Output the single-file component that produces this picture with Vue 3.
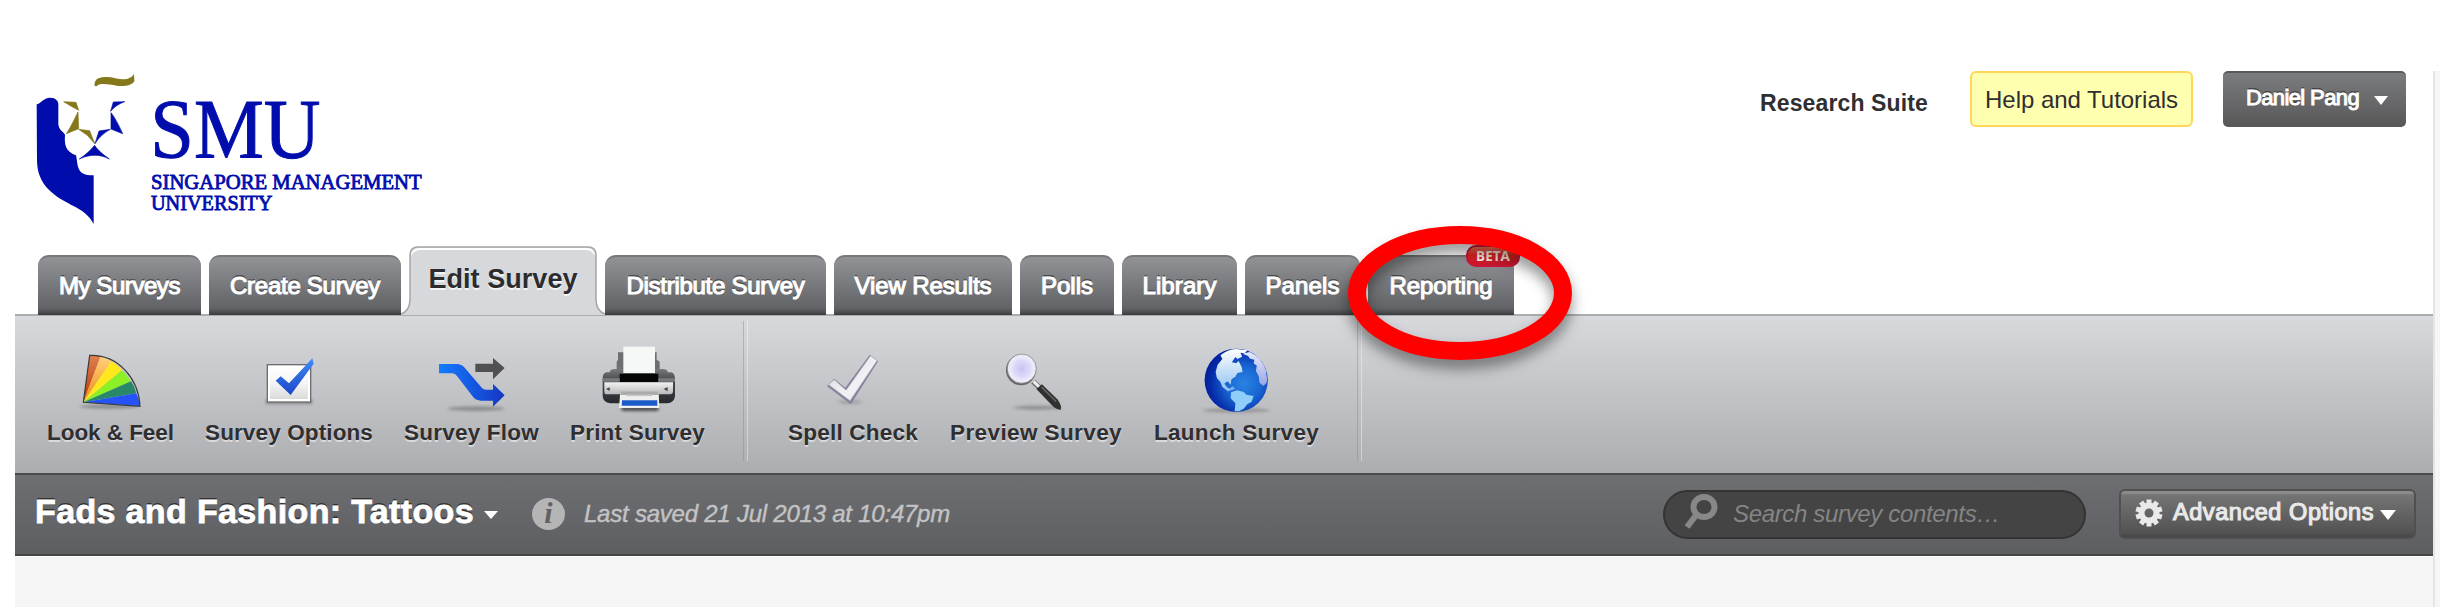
<script setup>
const tabs = [
  { label: 'My Surveys', w: 163, t: 121 },
  { label: 'Create Survey', w: 192, t: 150 },
  { label: 'Edit Survey', w: 188, t: 149, active: true },
  { label: 'Distribute Survey', w: 221, t: 178 },
  { label: 'View Results', w: 178, t: 137 },
  { label: 'Polls', w: 94, t: 52 },
  { label: 'Library', w: 115, t: 74 },
  { label: 'Panels', w: 115, t: 74 },
  { label: 'Reporting', w: 146, t: 103, beta: true },
]

// Tracks a label so that it fills the given width.
const vFit = {
  mounted(el, { value }) {
    const extra = value - el.getBoundingClientRect().width
    el.style.letterSpacing = extra / el.textContent.trim().length + 'px'
  },
}
</script>

<template>
  <div class="page">
    <div class="main">
      <header class="header">
        <svg class="logo" viewBox="45 63 1305 504">
          <path d="M284 108C282 92 290 82 316 81C345 80 365 95 388 84C397 80 401 76 402 70L403 94C394 108 370 110 350 107C325 103 297 98 290 109Z" fill="#85781b" />
          <path d="M110 163C123 161 130 143 150 143C168 143 175 154 175 163V222C176 240 190 245 195 254C193 285 196 303 228 316C234 340 228 374 270 376H281V522C272 505 258 487 225 470C160 438 111 405 111 330Z" fill="#000dac" />
          <g fill="#85781b" stroke="#85781b" stroke-width="2">
            <path d="M191 155L228 157L236 181L216 170ZM234 186L236 236L199 251C213 230 222 210 234 186ZM236 238L269 242L284 281L262 256Z" />
          </g>
          <g fill="#000dac" stroke="#000dac" stroke-width="2">
            <path d="M340 156L374 155C356 162 342 170 332 184ZM333 188C343 200 356 224 368 251L333 237ZM331 238L297 243L285 281C295 264 312 248 331 238ZM284 286C292 300 311 315 328 327C300 312 270 312 238 327C257 315 273 300 284 286Z" />
          </g>
          <text class="smu" x="451" y="325" font-size="254" textLength="510" lengthAdjust="spacingAndGlyphs">SMU</text>
          <text class="sub" x="453" y="417" font-size="62" textLength="812" lengthAdjust="spacingAndGlyphs">SINGAPORE MANAGEMENT</text>
          <text class="sub" x="453" y="479" font-size="62" textLength="364" lengthAdjust="spacingAndGlyphs">UNIVERSITY</text>
        </svg>
        <div class="account">
          <span class="suite"><span v-fit="168">Research Suite</span></span>
          <button class="help"><span v-fit="193">Help and Tutorials</span></button>
          <button class="user"><span v-fit="113">Daniel Pang</span><i class="caret"></i></button>
        </div>
      </header>

      <nav class="tabs">
        <div v-for="t in tabs" :key="t.label" class="tab" :class="{ active: t.active }" :style="{ width: t.w + 'px' }">
          <svg v-if="t.active" class="shape" width="204" height="69" viewBox="0 0 204 69">
            <path d="M0 69V68C6 66 9 60 9 53V9Q9 1 17 1H187Q195 1 195 9V53C195 60 198 66 204 68V69Z" fill="#d7d8dc" />
            <path d="M10 10Q11 2 18 2H186Q193 2 194 10Q191 4 185 4H19Q13 4 10 10Z" fill="#fff" />
            <path d="M0 68C6 66 9 60 9 53V9Q9 1 17 1H187Q195 1 195 9V53C195 60 198 66 204 68" fill="none" stroke="#a4a5a7" stroke-width="1.5" />
          </svg>
          <span v-fit="t.t" class="tab-text">{{ t.label }}</span>
          <span v-if="t.beta" class="beta">BETA</span>
          <svg v-if="t.beta" class="ring" width="264" height="184" viewBox="0 0 264 184">
            <ellipse cx="132" cy="87" rx="103" ry="58" />
          </svg>
        </div>
      </nav>

      <section class="toolbar">
        <div class="group">
          <div class="tool">
            <svg viewBox="181 12 300 252">
              <defs>
                <linearGradient id="or" x1="0" y1="0" x2="0" y2="1"><stop stop-color="#df8250" /><stop offset="1" stop-color="#b83400" /></linearGradient>
                <linearGradient id="am" x1="0" y1="0" x2="0" y2="1"><stop stop-color="#ffd17c" /><stop offset="1" stop-color="#f08a10" /></linearGradient>
                <filter id="soft" x="-30%" y="-100%" width="160%" height="300%"><feGaussianBlur stdDeviation="5" /></filter>
              </defs>
              <ellipse cx="325" cy="227" rx="88" ry="6" fill="#666" opacity=".6" filter="url(#soft)" />
              <path d="M248 214L267 73Q285 70 300 76Z" fill="url(#or)" />
              <path d="M248 214L300 76Q318 81 332 90Z" fill="url(#am)" />
              <path d="M248 214L332 90Q351 101 364 118Z" fill="#ffe81c" />
              <path d="M248 214L364 118Q380 132 391 151Z" fill="#8bf026" />
              <path d="M248 214L391 151Q403 167 407 187Z" fill="#27896a" />
              <path d="M248 214L407 187Q416 205 417 225Z" fill="#2553f7" />
              <path d="M248 214L267 73C355 70 414 145 418 226Z" fill="none" stroke="#3a3a3a" stroke-width="3.5" />
            </svg>
            <span v-fit="127">Look &amp; Feel</span>
          </div>
          <div class="tool">
            <svg viewBox="717 12 300 252">
              <defs>
                <linearGradient id="box" x1="0" y1="0" x2="0" y2="1"><stop stop-color="#fff" /><stop offset=".5" stop-color="#f5f5f5" /><stop offset="1" stop-color="#dadada" /></linearGradient>
                <linearGradient id="ck" x1="0" y1="0" x2="0" y2="1"><stop stop-color="#3f8df6" /><stop offset="1" stop-color="#1c45c9" /></linearGradient>
              </defs>
              <rect x="797" y="205" width="140" height="14" fill="#666" opacity=".6" filter="url(#soft)" />
              <rect x="802" y="101" width="130" height="112" fill="#fff" stroke="#6c6c6e" stroke-width="4" />
              <rect x="810" y="109" width="114" height="95" fill="url(#box)" />
              <path d="M827 149L842 136L867 157L937 82L941 98L872 192Z" fill="url(#ck)" />
            </svg>
            <span v-fit="168">Survey Options</span>
          </div>
          <div class="tool">
            <svg viewBox="128 12 300 252">
              <defs>
                <linearGradient id="fl" x1="0" y1="0" x2="1" y2="0"><stop stop-color="#147cff" /><stop offset="1" stop-color="#1536c4" /></linearGradient>
              </defs>
              <ellipse cx="290" cy="233" rx="85" ry="7" fill="#666" opacity=".55" filter="url(#soft)" />
              <path d="M288 98H341V81L376 111L341 145V123H288Z" fill="#515154" />
              <path d="M179 99H232Q246 99 256 110L308 171Q312 176 320 176H341V159L376 193L341 227V209H305Q291 209 282 199L233 135Q228 127 219 127H179Z" fill="url(#fl)" />
            </svg>
            <span v-fit="135">Survey Flow</span>
          </div>
          <div class="tool">
            <svg viewBox="625 12 300 252">
              <defs>
                <linearGradient id="pr" x1="0" y1="0" x2="0" y2="1"><stop stop-color="#777a7d" /><stop offset=".3" stop-color="#4a4e51" /><stop offset="1" stop-color="#25292d" /></linearGradient>
                <linearGradient id="pb" x1="0" y1="0" x2="0" y2="1"><stop stop-color="#f2f2f2" /><stop offset="1" stop-color="#b7b7ba" /></linearGradient>
              </defs>
              <rect x="725" y="226" width="112" height="14" rx="6" fill="#333" opacity=".8" filter="url(#soft)" />
              <path d="M715 64H733V118H711V92L715 86ZM823 64H831V86L840 92V118H823Z" fill="#6d7073" />
              <path d="M690 124Q692 114 704 114H850Q862 114 865 124H876Q886 128 886 145V195Q884 216 862 217H692Q670 214 669 195V142Q669 127 680 124Z" fill="url(#pr)" />
              <rect x="731" y="47" width="95" height="79" fill="#f6f7f7" />
              <path d="M720 128H836V153H720Z" fill="#050505" />
              <path d="M674 154H880V181Q880 190 872 190H682Q674 190 674 182Z" fill="url(#pb)" />
              <path d="M669 142H720V152H669ZM836 142H886V152H836Z" fill="#787b7d" />
              <path d="M679 174L690 169V180ZM852 174L864 168V181Z" fill="#444" />
              <path d="M722 181H837L839 231H718Z" fill="#f0f0f0" />
              <path d="M722 181H837V192H722Z" fill="#a9abad" />
              <path d="M740 193H817" stroke="#c6c6c6" stroke-width="5" />
              <path d="M727 208H833V224H726Z" fill="#1b5cc9" />
            </svg>
            <span v-fit="135">Print Survey</span>
          </div>
        </div>
        <div class="group">
          <div class="tool">
            <svg viewBox="108 12 253 252" preserveAspectRatio="none">
              <defs>
                <linearGradient id="sp" x1="0" y1="0" x2="1" y2="1"><stop stop-color="#d5d5dc" /><stop offset=".6" stop-color="#f2f2f6" /><stop offset="1" stop-color="#dedee3" /></linearGradient>
              </defs>
              <ellipse cx="227" cy="213" rx="30" ry="7" fill="#888" opacity=".5" filter="url(#soft)" />
              <path d="M169 166L187 143L215 170L277 71L298 91L229 220Z" fill="#85829c" />
              <path d="M173 161L187 146L217 178L279 74L295 89L227 209Z" fill="url(#sp)" stroke="#b4b2c0" stroke-width="1.5" />
            </svg>
            <span v-fit="130">Spell Check</span>
          </div>
          <div class="tool">
            <svg viewBox="570.5 12 253 252" preserveAspectRatio="none">
              <defs>
                <radialGradient id="ln"><stop stop-color="#c8c4f2" /><stop offset=".65" stop-color="#dedcf9" /><stop offset="1" stop-color="#f3f2ff" /></radialGradient>
              </defs>
              <ellipse cx="700" cy="230" rx="60" ry="6" fill="#666" opacity=".55" filter="url(#soft)" />
              <path d="M690 152L708 172" stroke="#777" stroke-width="15" />
              <path d="M691 151L707 170" stroke="#ededed" stroke-width="8" />
              <path d="M698 174L712 160L751 205Q762 222 760 236Q748 236 739 225Z" fill="#303030" />
              <path d="M711 168L748 212" stroke="#666" stroke-width="4" />
              <ellipse cx="659" cy="117" rx="35" ry="43" fill="none" stroke="#66666b" stroke-width="6" />
              <ellipse cx="661" cy="113" rx="34" ry="41" fill="url(#ln)" stroke="#e8e8ea" stroke-width="4" />
              <ellipse cx="661" cy="113" rx="37" ry="44" fill="none" stroke="#8a8a90" stroke-width="2" />
            </svg>
            <span v-fit="172">Preview Survey</span>
          </div>
          <div class="tool">
            <svg viewBox="1075.5 12 253 252" preserveAspectRatio="none">
              <defs>
                <radialGradient id="gl" cx=".62" cy=".55" r=".62"><stop stop-color="#2a84e2" /><stop offset=".45" stop-color="#1865d2" /><stop offset=".85" stop-color="#0629a8" /><stop offset="1" stop-color="#04209a" /></radialGradient>
                <linearGradient id="la" x1="0" y1="0" x2="0" y2="1"><stop stop-color="#fff" /><stop offset="1" stop-color="#8ec0f2" /></linearGradient>
                <linearGradient id="lb" x1="0" y1="0" x2="0" y2="1"><stop stop-color="#e4e8fb" /><stop offset="1" stop-color="#98a6e4" /></linearGradient>
              </defs>
              <ellipse cx="1200" cy="238" rx="85" ry="7" fill="#777" opacity=".55" filter="url(#soft)" />
              <ellipse cx="1200" cy="148" rx="80" ry="95" fill="url(#gl)" />
              <path d="M1160 73Q1178 55 1200 54L1228 58L1222 67L1211 65L1215 77L1203 84L1198 78L1189 94L1200 97L1206 90L1214 109L1216 123L1203 126L1198 137L1188 145L1186 161L1178 151L1170 158L1177 169L1188 177L1179 181L1165 168L1160 153L1151 141L1148 123L1153 101L1165 84Z" fill="url(#la)" />
              <path d="M1216 68L1234 63Q1264 78 1275 117L1278 145Q1278 160 1268 164L1259 155L1257 136L1250 120L1252 104L1244 97L1246 86L1235 83L1230 75Z" fill="url(#lb)" />
              <path d="M1180 174L1192 166L1197 173L1189 178Z" fill="#78aeef" />
              <path d="M1187 184L1202 178L1219 183L1226 191L1244 195L1239 212L1228 220L1219 233L1207 241L1196 241L1198 217L1186 202Z" fill="#8fcef9" />
            </svg>
            <span v-fit="165">Launch Survey</span>
          </div>
        </div>
      </section>

      <section class="titlebar">
        <h1><span v-fit="439">Fads and Fashion: Tattoos</span></h1>
        <i class="caret title-caret"></i>
        <span class="info">i</span>
        <span class="saved"><span v-fit="366">Last saved 21 Jul 2013 at 10:47pm</span></span>
        <div class="search">
          <svg width="34" height="36" viewBox="0 0 34 36">
            <ellipse cx="20" cy="13" rx="10.5" ry="10" fill="none" stroke="#888" stroke-width="6" />
            <path d="M13 20L3 33" stroke="#888" stroke-width="6" />
          </svg>
          <span v-fit="267">Search survey contents…</span>
        </div>
        <button class="advanced">
          <svg width="28" height="28" viewBox="-14 -14 28 28">
            <circle r="7.5" fill="none" stroke="#e9e9e9" stroke-width="6" />
            <g stroke="#e9e9e9" stroke-width="5">
              <path v-for="n in 10" :key="n" d="M0-9V-13.5" :transform="`rotate(${n * 36})`" />
            </g>
          </svg>
          <span v-fit="201">Advanced Options</span>
          <i class="caret"></i>
        </button>
      </section>
    </div>
    <div class="edge"></div>
  </div>
</template>

<style>
body { margin: 0; background: #fff; }
</style>

<style scoped>
* { box-sizing: border-box; }
.page {
  display: flex;
  width: 2462px;
  height: 607px;
  padding: 71px 0 0 15px;
  overflow: hidden;
  font-family: "Liberation Sans", Arial, sans-serif;
  white-space: nowrap;
  color: #2f2f31;
}
.main { width: 2418px; display: flex; flex-direction: column; background: linear-gradient(#fff 0 486px, #f5f5f5 486px); }
.edge { width: 7px; background: #f6f6f6; border-left: 2px solid #e5e5e5; }
button { font-family: inherit; padding: 0; color: inherit; }

.header { height: 175px; display: flex; justify-content: space-between; align-items: flex-start; flex: none; }
.logo { width: 435px; height: 168px; font-family: "Liberation Serif", serif; }
.logo text { fill: #000dac; stroke: #000dac; }
.logo .smu { stroke-width: 3; }
.logo .sub { stroke-width: 2.4; }
.account { display: flex; align-items: flex-start; padding-right: 27px; }
.suite { font-weight: bold; font-size: 23px; line-height: 64px; width: 210px; }
.help {
  width: 223px; height: 56px; margin-right: 30px; border: 2px solid #ffd65a; border-radius: 6px;
  background: #ffffb0; font-size: 24px; line-height: 54px; padding-bottom: 3px;
}
.user {
  display: flex; align-items: center; width: 183px; height: 56px; padding: 0 0 4px 23px;
  border: 0; border-top: 2px solid #5a5a5b; border-radius: 5px; background: linear-gradient(#7b7c7e, #575758);
  font-size: 22px; color: #fff; -webkit-text-stroke: 1px #fff; text-shadow: 0 -2px 0 #444;
}
.caret { flex: none; width: 0; height: 0; border: solid transparent; border-width: 9px 7.5px 0; border-top-color: #fff; }
.user .caret { margin: 5px 0 0 15px; }

.tabs { position: relative; z-index: 1; height: 69px; margin-bottom: -1px; display: flex; gap: 8px; align-items: flex-end; padding-left: 23px; flex: none; }
.tab {
  position: relative; display: flex; justify-content: center; flex: none; height: 60px; line-height: 57px;
  border-radius: 11px 11px 0 0; border-top: 2px solid #77787a;
  background: linear-gradient(#929397 0, #626366 88%, #515254 94%, #3b3b3d 100%);
  color: #fff; font-size: 24px; -webkit-text-stroke: 1.1px #fff; text-shadow: 0 -2px 0 #4c4c4e;
}
.tab-text { position: relative; }
.tab.active {
  height: 69px; line-height: 67px; border: 0; background: none; color: #2c2c2e; font-size: 27px; font-weight: bold;
  -webkit-text-stroke: 0; text-shadow: 0 2px 0 #f4f4f5;
}
.shape { position: absolute; left: -8px; top: 0; }
.beta {
  position: absolute; left: 98px; top: -12px; width: 54px; height: 22px; border-radius: 10px;
  border: 2px solid #cf1636; background: linear-gradient(#f97a5c, #e3231f 45%, #cc1730);
  font: bold 13.5px/18px "Open Sans", sans-serif; text-align: center; -webkit-text-stroke: 0; text-shadow: none; color: #ffece6;
}
.ring { position: absolute; left: -40px; top: -51px; overflow: visible; filter: drop-shadow(0 9px 7px rgba(0, 0, 0, .42)); }
.ring ellipse { fill: none; stroke: #f00; stroke-width: 18; }

.toolbar {
  height: 159px; flex: none; display: flex; padding-left: 32px; border-top: 2px solid #abacae;
  background: linear-gradient(#d8d9dc, #acadb1);
}
.group { display: flex; gap: 31px; padding: 19px 40px 0 0; position: relative; }
.group + .group { padding-left: 43px; gap: 32px; }
.group::after {
  content: ""; position: absolute; right: -3px; top: 5px; width: 3px; height: 140px;
  border-left: 1.5px solid rgba(130, 131, 135, .4); border-right: 1px solid rgba(255, 255, 255, .4);
}
.tool { display: flex; flex-direction: column; align-items: center; font-size: 22.5px; font-weight: bold; line-height: 27px; text-shadow: 0 2px 0 rgba(255, 255, 255, .5); }
.tool svg { width: 100px; height: 84px; }

.titlebar {
  height: 83px; flex: none; display: flex; align-items: center; padding: 0 17px 5px 20px;
  border-top: 2px solid #4b4c4f; border-bottom: 2px solid #454547;
  background: linear-gradient(#6e6f73, #5d5e60);
}
h1 { margin: 0 0 2px; width: 449px; font-size: 34px; line-height: 72px; color: #fff; text-shadow: 0 -2px 0 #333; -webkit-text-stroke: .8px #fff; }
.title-caret { margin-top: 6px; border-left-width: 7px; border-right-width: 7px; border-top-width: 8px; }
.info {
  width: 33px; height: 32px; margin: 3px 19px 0 34px; border-radius: 50%; background: #b5b5b5; color: #606163;
  font: italic bold 30px/30px "Liberation Serif", serif; text-align: center;
}
.saved { font-size: 24px; font-style: italic; color: #c3c3c4; margin-top: 4px; flex: 1; -webkit-text-stroke: .4px #c3c3c4; }
.search {
  width: 423px; height: 49px; margin: 4px 33px 0 0; padding-left: 19px; border-radius: 25px; border: 2px solid #343434;
  background: #444; display: flex; align-items: center; gap: 15px; font-size: 24px; font-style: italic; color: #858585;
}
.search svg { margin-top: -5px; }
.advanced {
  width: 297px; height: 50px; margin-top: 4px; padding: 0 0 3px 14px; display: flex; align-items: center;
  border: 2px solid #505051; border-radius: 6px; background: linear-gradient(#8c8c8c 0 2px, #747474 4px, #525252 92%, #454545);
  font-size: 23.5px; color: #e9e9ea; -webkit-text-stroke: 1.2px #e9e9ea; text-shadow: 0 -1px 0 #444;
}
.advanced svg { margin-right: 10px; }
.advanced .caret { margin: 4px 0 0 6px; border-width: 10px 8px 0; }
</style>
